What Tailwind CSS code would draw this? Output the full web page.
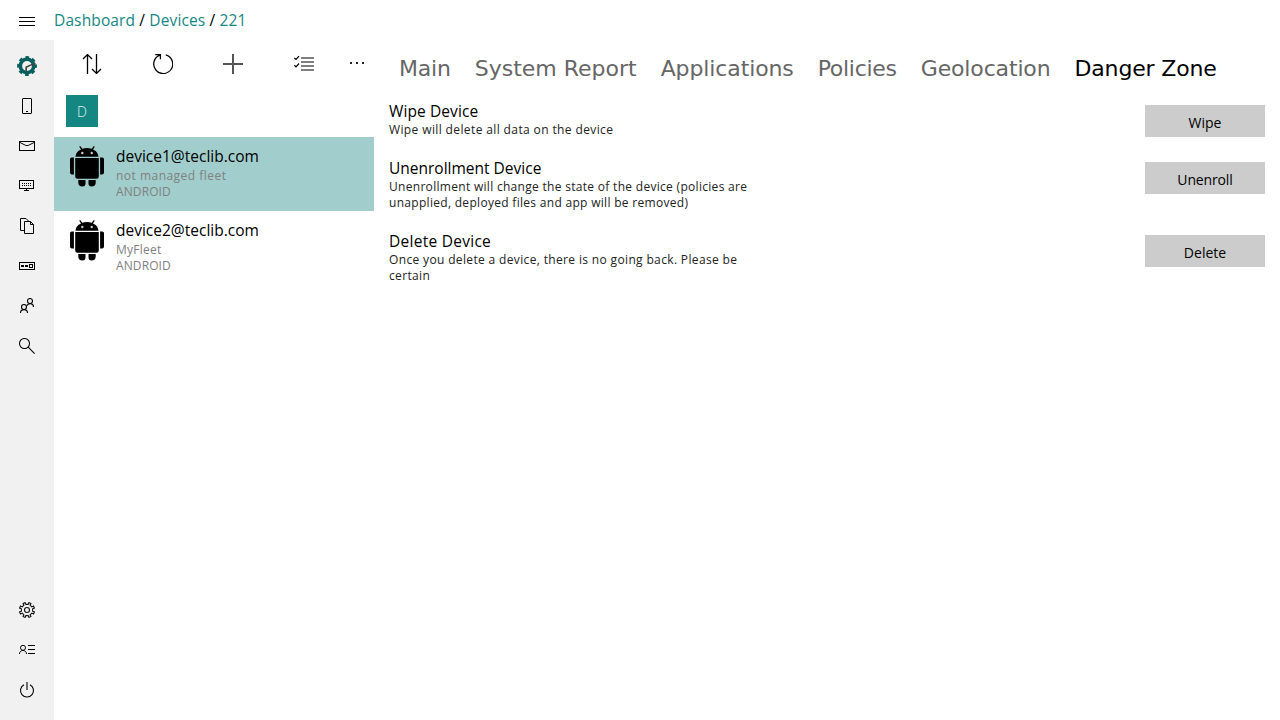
<!DOCTYPE html>
<html lang="en">
<head>
<meta charset="utf-8">
<title>Devices</title>
<script src="https://cdn.jsdelivr.net/npm/@tailwindcss/browser@4"></script>
</head>
<body class="h-screen overflow-hidden bg-white font-['Open_Sans','Noto_Sans',sans-serif] text-black">
<svg class="hidden">
  <symbol id="android" viewBox="0 0 34 42">
    <path d="M5.500 11.700C6 7.500 8.500 5.500 11 4.500L9.200 1.700L10.200 1L12.300 3.800Q17 2.300 21.700 3.800L23.800 1L24.800 1.700L23 4.500C25.500 5.500 28 7.500 28.500 11.700ZM5.200 12.900H28.800V31.500Q28.800 33.800 26.500 33.800H7.500Q5.200 33.800 5.200 31.500ZM0 14Q0 12.500 1.800 12.500H3.900V29.500Q0 29.800 0 27.500ZM34 14Q34 12.500 32.200 12.500H30.100V29.500Q34 29.800 34 27.500ZM8.300 35H15.500V38.500Q15.500 41.500 12.500 41.500Q8.300 41.500 8.300 37.500ZM18.500 35H25.700V37.500Q25.700 41.500 21.500 41.500Q18.500 41.500 18.500 38.500Z"/>
    <g fill="#fff" fill-opacity=".8"><circle cx="12.300" cy="8" r="1.200"/><circle cx="21.700" cy="8" r="1.200"/></g>
  </symbol>
</svg>
<div class="flex h-full flex-col">
  <header class="flex h-10 shrink-0 items-center">
    <button class="flex w-[54px] justify-center pt-0.5"><svg class="h-4 w-4" viewBox="0 0 16 16" stroke="#000" shape-rendering="crispEdges"><path d="M0 4.500H16M0 8.500H16M0 12.500H16"/></svg></button>
    <nav class="pb-px text-[15.5px] leading-5 tracking-[0.13px] whitespace-pre"><a class="text-[#158783]">Dashboard</a> / <a class="text-[#158783]">Devices</a> / <a class="text-[#158783]">221</a></nav>
  </header>
  <div class="flex min-h-0 flex-1">
    <aside class="flex w-[54px] shrink-0 flex-col justify-between bg-[#f1f1f1] pt-1.5 pb-2.5">
      <nav class="flex flex-col">
        <a class="flex h-10 items-center justify-center"><svg class="h-5 w-5" viewBox="0 0 20 20"><circle cx="10" cy="10" r="6.700" fill="none" stroke="#08605e" stroke-width="3.600"/><circle cx="10" cy="10" r="8.900" fill="none" stroke="#08605e" stroke-width="2" stroke-dasharray="3.800 3.190" stroke-dashoffset="1.900"/><path d="M9.200 15V11.300Q13 8.800 18.500 7.500" fill="none" stroke="#444" stroke-width="1.700"/></svg></a>
        <a class="flex h-10 items-center justify-center"><svg class="h-4 w-4" viewBox="0 0 16 16" fill="none" stroke="#000"><rect x="3.500" y=".5" width="9" height="15" rx=".5"/><path d="M7 13.500H9"/></svg></a>
        <a class="flex h-10 items-center justify-center"><svg class="h-4 w-4" viewBox="0 0 16 16" fill="none" stroke="#000"><rect x=".5" y="3.500" width="15" height="9"/><path d="M1 4.500L6.500 7.300Q8 8 9.500 7.300L15 4.500"/></svg></a>
        <a class="flex h-10 items-center justify-center"><svg class="h-4 w-4" viewBox="0 0 16 16" fill="none" stroke="#000"><rect x=".5" y="2.500" width="14" height="8"/><path d="M7.500 11V12.500M5 12.500H10"/><path d="M3 5.500H13M3 7.500H13" stroke-dasharray="1 1"/></svg></a>
        <a class="flex h-10 items-center justify-center"><svg class="h-4 w-4" viewBox="0 0 16 16" fill="none" stroke="#000"><path d="M5 12.500H1.500V.5H7L10 3.500M5.500 3.500H11.500L14.500 6.500V15.500H5.500ZM11.500 3.500V6.500H14.500"/></svg></a>
        <a class="flex h-10 items-center justify-center"><svg class="h-4 w-4" viewBox="0 0 16 16" fill="none" stroke="#000"><rect x=".5" y="4.500" width="15" height="7"/><rect x="10.500" y="6.500" width="3" height="3"/><path d="M2 8H5M6 8H9" stroke-width="2"/></svg></a>
        <a class="flex h-10 items-center justify-center"><svg class="h-4 w-4" viewBox="0 0 16 16" fill="none" stroke="#000" stroke-width="1.100"><circle cx="5" cy="9" r="2.500"/><circle cx="11" cy="3" r="2.500"/><path d="M1.500 15C1.500 10.500 8.500 10.500 8.500 15M7.700 7.800C9 5 14.500 4.700 14.500 9"/></svg></a>
        <a class="flex h-10 items-center justify-center"><svg class="h-4 w-4" viewBox="0 0 16 16" fill="none" stroke="#000" stroke-width="1.050"><circle cx="5.500" cy="5.500" r="5"/><path d="M9.200 9.200L15.600 15.600"/></svg></a>
      </nav>
      <nav class="flex flex-col">
        <a class="flex h-10 items-center justify-center"><svg class="h-4 w-4" viewBox="0 0 16 16" fill="none" stroke="#111" stroke-width="1.100"><circle cx="8" cy="8" r="2.500"/><path d="M6.800 2.400L6.100.6L4.100 1.500L4.900 3.200L3.200 4.900L1.500 4.100L.6 6.100L2.400 6.800V9.200L.6 9.900L1.500 11.900L3.200 11.100L4.900 12.800L4.100 14.500L6.100 15.400L6.800 13.600H9.200L9.900 15.400L11.900 14.500L11.100 12.800L12.800 11.100L14.500 11.900L15.400 9.900L13.600 9.200V6.800L15.400 6.100L14.500 4.100L12.800 4.900L11.100 3.200L11.900 1.500L9.900.6L9.200 2.400Z"/></svg></a>
        <a class="flex h-10 items-center justify-center"><svg class="h-4 w-4" viewBox="0 0 16 16" fill="none" stroke="#000"><circle cx="4" cy="5.800" r="2.500"/><path d="M.5 12C.5 7.300 7.500 7.300 7.500 12"/><path d="M9 3.500H16M9 7.500H16M9 11.500H16"/></svg></a>
        <a class="flex h-10 items-center justify-center"><svg class="h-4 w-4" viewBox="0 0 16 16" fill="none" stroke="#000" stroke-width="1.100"><path d="M5 2.700A6.500 6.500 0 1 0 11 2.700"/><path d="M8 0V8" stroke="#555" stroke-width="1.700"/></svg></a>
      </nav>
    </aside>
    <section class="flex w-80 shrink-0 flex-col">
      <div class="flex h-12 items-center pl-7">
        <button class="shrink-0"><svg class="h-5 w-5" viewBox="0 0 20 20" fill="none" stroke="#000" stroke-width="1.300"><path d="M5.500 20V.8M1 5L5.500.6L10 5M14.500 0V19.200M10 15L14.500 19.400L19 15"/></svg></button>
        <button class="ml-[51px] shrink-0"><svg class="h-5 w-5" viewBox="0 0 20 20" fill="none" stroke="#000" stroke-width="1.300"><path d="M12.800.9A9.500 9.500 0 1 1 6.800 1.200M2.300.6H7.400V5.200"/></svg></button>
        <button class="ml-[50px] shrink-0"><svg class="h-5 w-5" viewBox="0 0 20 20" fill="none" stroke="#555" stroke-width="2"><path d="M0 10H20M10 0V20"/></svg></button>
        <button class="ml-[51px] shrink-0"><svg class="h-5 w-5" viewBox="0 0 20 20" fill="none" stroke="#000" stroke-width="1.200"><path d="M7 4H20M7 8H20M7 12H20M7 16H20M.3 4L2 5.500L5 2.200M.3 11.300L2 12.800L5 9.500"/></svg></button>
        <button class="ml-[34px] shrink-0"><svg class="h-5 w-5" viewBox="0 0 20 20" fill="#222"><path d="M2 8h2v2H2ZM8 8h2v2H8ZM14 8h2v2H14Z"/></svg></button>
      </div>
      <div class="flex h-[49px] pt-[7px] pl-3">
        <div class="flex h-8 w-8 items-center justify-center bg-[#158783] text-[14px] leading-5 font-light text-white/85"><span class="pt-0.5">D</span></div>
      </div>
      <ul>
        <li class="flex h-[74px] bg-[#a1cecc] pt-2 pl-4">
          <svg class="h-[42px] w-[34px]"><use href="#android"/></svg>
          <div class="ml-3 flex flex-col pt-px">
            <span class="pb-0.5 text-[15.5px] leading-5">device1@teclib.com</span>
            <span class="text-[12px] leading-4 tracking-[0.48px] text-[#808080]">not managed fleet</span>
            <span class="text-[12px] leading-4 tracking-[0.1px] text-[#808080]">ANDROID</span>
          </div>
        </li>
        <li class="flex h-[74px] pt-2 pl-4">
          <svg class="h-[42px] w-[34px]"><use href="#android"/></svg>
          <div class="ml-3 flex flex-col pt-px">
            <span class="pb-0.5 text-[15.5px] leading-5">device2@teclib.com</span>
            <span class="text-[12px] leading-4 tracking-[0.25px] text-[#808080]">MyFleet</span>
            <span class="text-[12px] leading-4 tracking-[0.1px] text-[#808080]">ANDROID</span>
          </div>
        </li>
      </ul>
    </section>
    <main class="flex min-w-0 flex-1 flex-col">
      <nav class="flex h-[61px] gap-6 pt-[13px] pl-[25px] font-['DejaVu_Sans',sans-serif] text-[22px] leading-8 whitespace-nowrap text-[#666]">
        <a class="tracking-[-0.2px]">Main</a><a>System Report</a><a class="tracking-[-0.12px]">Applications</a><a class="tracking-[-0.28px]">Policies</a><a class="tracking-[-0.15px]">Geolocation</a><a class="tracking-[-0.15px] text-black">Danger Zone</a>
      </nav>
      <ul class="flex flex-col gap-5 pr-[15px] pl-[15px]">
        <li class="flex items-start justify-between">
          <div class="text-[12px] leading-4 whitespace-nowrap text-[#222]">
            <h3 class="pb-px text-[15.5px] leading-5 tracking-[0.1px] text-black">Wipe Device</h3>
            <p class="tracking-[0.38px]">Wipe will delete all data on the device</p>
          </div>
          <button class="mt-1 h-8 w-[120px] bg-[#cccccc] pt-[3px] text-[14px] leading-5">Wipe</button>
        </li>
        <li class="flex items-start justify-between">
          <div class="text-[12px] leading-4 whitespace-nowrap text-[#222]">
            <h3 class="pb-px text-[15.5px] leading-5 text-black">Unenrollment Device</h3>
            <p class="tracking-[0.3px]">Unenrollment will change the state of the device (policies are<br>unapplied, deployed files and app will be removed)</p>
          </div>
          <button class="mt-1 h-8 w-[120px] bg-[#cccccc] pt-[3px] text-[14px] leading-5 tracking-[-0.15px]">Unenroll</button>
        </li>
        <li class="flex items-start justify-between">
          <div class="text-[12px] leading-4 whitespace-nowrap text-[#222]">
            <h3 class="pb-px text-[15.5px] leading-5 tracking-[0.27px] text-black">Delete Device</h3>
            <p class="tracking-[0.35px]">Once you delete a device, there is no going back. Please be<br>certain</p>
          </div>
          <button class="mt-1 h-8 w-[120px] bg-[#cccccc] pt-[3px] text-[14px] leading-5">Delete</button>
        </li>
      </ul>
    </main>
  </div>
</div>
</body>
</html>
